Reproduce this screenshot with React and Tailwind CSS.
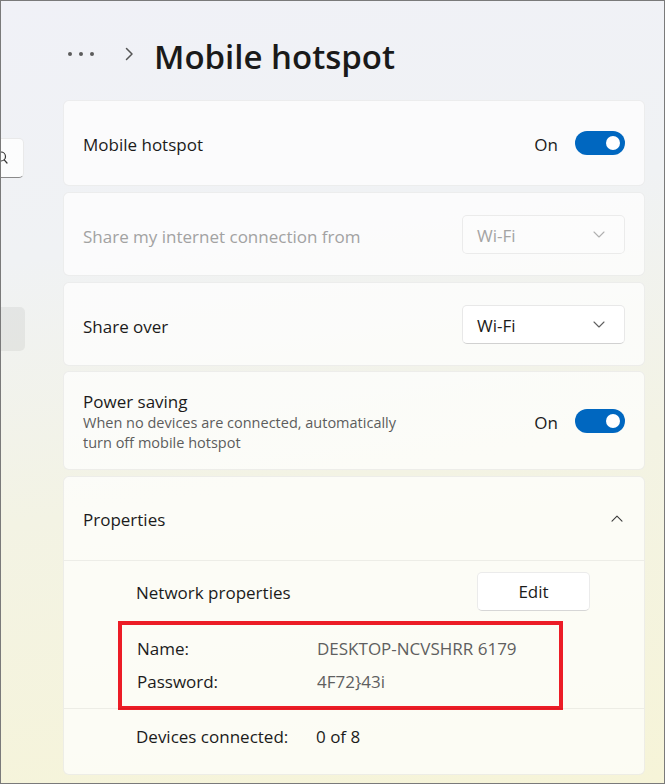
import React from 'react';

function Toggle() {
  return (
    <div className="flex items-center gap-[17px]">
      <span className="pt-[4px]">On</span>
      <div className="w-[50px] h-[24px] rounded-full bg-[#0067c0] flex items-center justify-end pr-[5px]">
        <div className="w-[14px] h-[14px] rounded-full bg-white" />
      </div>
    </div>
  );
}

function Chevron({ up, color = '#5f5f5f' }) {
  return (
    <svg width="12" height="7" viewBox="0 0 12 7" fill="none">
      <path
        d={up ? 'M1 6.2L6 1.2L11 6.2' : 'M1 1L6 6L11 1'}
        stroke={color}
        strokeWidth="1.1"
        strokeLinecap="round"
        strokeLinejoin="round"
      />
    </svg>
  );
}

function Dropdown({ disabled }) {
  return (
    <div
      className={
        disabled
          ? 'w-[163px] h-[39px] rounded-[5px] border border-black/[0.07] bg-white/40 flex items-center justify-between pl-[14px] pr-[19px] text-[#a4a4a4]'
          : 'w-[163px] h-[39px] rounded-[5px] border border-black/[0.09] border-b-black/[0.18] bg-white flex items-center justify-between pl-[14px] pr-[19px] text-[#1b1b1b]'
      }
    >
      <span className="pt-[4px]">Wi-Fi</span>
      <Chevron color={disabled ? '#b0b0b0' : '#5f5f5f'} />
    </div>
  );
}

function Card({ className = '', children }) {
  return (
    <div className={'rounded-[6px] border border-black/[0.06] bg-white/70 ' + className}>
      {children}
    </div>
  );
}

export default function App() {
  return (
    <div className="w-[665px] h-[784px] border border-[#7a7a7a] flex overflow-hidden text-[17px] text-[#1b1b1b] font-['Open_Sans',sans-serif] bg-[linear-gradient(172deg,#f0f1f7_0%,#f0f2f4_30%,#f3f3e4_60%,#f6f4d8_100%)]">
      <aside className="w-[62px] shrink-0 flex flex-col">
        <div className="mt-[137px] w-[23px] h-[40px] bg-white/80 border border-l-0 border-black/[0.08] border-b-[#8a8a8a] rounded-r-[5px] flex items-center overflow-hidden">
          <svg width="16" height="16" viewBox="0 0 16 16" fill="none" className="-ml-[9px]">
            <circle cx="9" cy="6.5" r="4.5" stroke="#333" strokeWidth="1.2" />
            <path d="M12.2 9.8L15 13" stroke="#333" strokeWidth="1.2" strokeLinecap="round" />
          </svg>
        </div>
        <div className="mt-[129px] w-[24px] h-[44px] bg-black/[0.05] rounded-r-[5px]" />
      </aside>

      <main className="flex-1 pr-[19px] flex flex-col">
        <header className="h-[99px] shrink-0 flex items-center pl-[5px] pt-[6px]">
          <div className="flex items-center gap-[7px]">
            <span className="w-[4px] h-[4px] rounded-full bg-[#5c5c5c]" />
            <span className="w-[4px] h-[4px] rounded-full bg-[#5c5c5c]" />
            <span className="w-[4px] h-[4px] rounded-full bg-[#5c5c5c]" />
          </div>
          <svg width="9" height="14" viewBox="0 0 9 14" fill="none" className="ml-[31px]">
            <path d="M1.5 1.5L7 7L1.5 12.5" stroke="#555" strokeWidth="1.5" strokeLinecap="round" strokeLinejoin="round" />
          </svg>
          <h1 className="ml-[20px] pt-[5px] text-[33px] font-semibold leading-none text-[#1a1a1a]">
            Mobile hotspot
          </h1>
        </header>

        <div className="flex flex-col gap-[6px]">
          <Card className="h-[86px] flex items-center justify-between pl-[19px] pr-[19px]">
            <span className="pt-[4px]">Mobile hotspot</span>
            <Toggle />
          </Card>

          <Card className="h-[84px] flex items-center justify-between pl-[19px] pr-[19px]">
            <span className="pt-[5px] text-[#a2a2a2]">Share my internet connection from</span>
            <Dropdown disabled />
          </Card>

          <Card className="h-[84px] flex items-center justify-between pl-[19px] pr-[19px]">
            <span className="pt-[5px]">Share over</span>
            <Dropdown />
          </Card>

          <Card className="h-[99px] -mt-[1px] flex items-center justify-between pl-[19px] pr-[19px]">
            <div className="flex flex-col max-w-[340px] pt-[2px]">
              <span className="leading-[22px]">Power saving</span>
              <span className="text-[14.5px] leading-[20px] text-[#5d5d5d]">
                When no devices are connected, automatically turn off mobile hotspot
              </span>
            </div>
            <Toggle />
          </Card>

          <Card className="flex flex-col">
            <div className="h-[84px] flex items-center justify-between pl-[19px] pr-[21px] border-b border-black/[0.06]">
              <span className="pt-[3px]">Properties</span>
              <Chevron up color="#3a3a3a" />
            </div>

            <div className="flex items-center justify-between pl-[72px] pr-[54px] pt-[11px]">
              <span className="pt-[3px]">Network properties</span>
              <button className="w-[113px] h-[39px] rounded-[5px] bg-white border border-black/[0.08] border-b-black/[0.16] text-[17px]">
                Edit
              </button>
            </div>

            <div className="mt-[10px] ml-[54px] w-[445px] border-4 border-[#ec1c26] pt-[7px] pb-[8px] pl-[15px]">
              <div className="h-[33px] flex items-center">
                <span className="w-[180px]">Name:</span>
                <span className="text-[#5f5f5f]">DESKTOP-NCVSHRR 6179</span>
              </div>
              <div className="h-[33px] flex items-center">
                <span className="w-[180px]">Password:</span>
                <span className="text-[#5f5f5f]">4F72}43i</span>
              </div>
            </div>

            <div className="border-t border-black/[0.06] -mt-[2px] pl-[72px] pt-[17px] pb-[26px] flex leading-[22px]">
              <span className="w-[180px]">Devices connected:</span>
              <span>0 of 8</span>
            </div>
          </Card>
        </div>
      </main>
    </div>
  );
}
